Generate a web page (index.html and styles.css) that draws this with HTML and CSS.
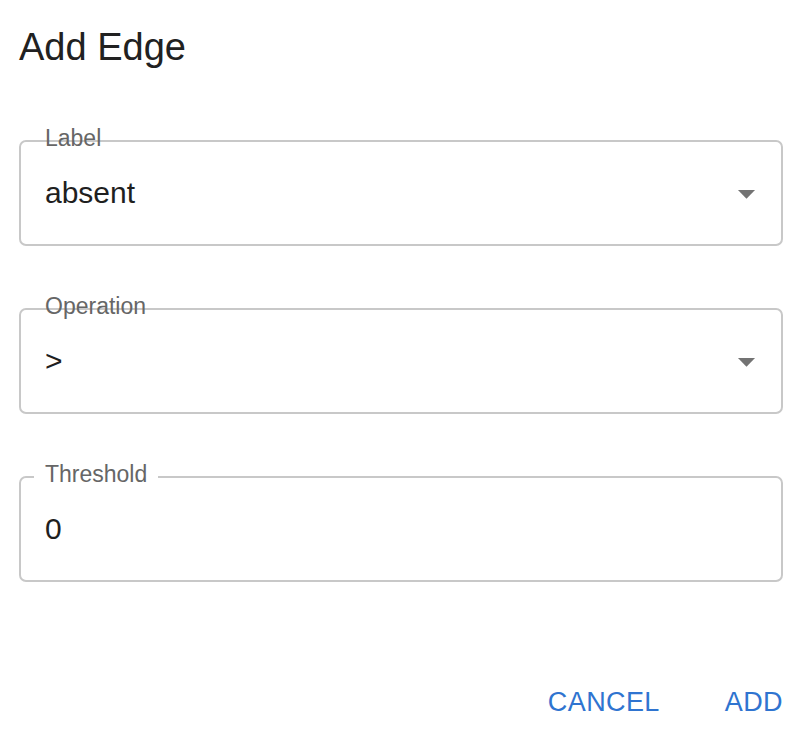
FILE: index.html
```html
<!DOCTYPE html>
<html lang="en">
<head>
<meta charset="utf-8">
<title>Add Edge</title>
<link rel="stylesheet" href="styles.css">
</head>
<body>
<div class="dialog">
  <h2 class="title">Add Edge</h2>
  <div class="content">
    <div class="field">
      <span class="label">Label</span>
      <span class="value">absent</span>
      <svg class="arrow" viewBox="0 0 24 24" aria-hidden="true"><path d="M7 10l5 5 5-5z"/></svg>
    </div>
    <div class="field">
      <span class="label">Operation</span>
      <span class="value">&gt;</span>
      <svg class="arrow" viewBox="0 0 24 24" aria-hidden="true"><path d="M7 10l5 5 5-5z"/></svg>
    </div>
    <div class="field">
      <span class="label notched">Threshold</span>
      <span class="value">0</span>
    </div>
  </div>
  <div class="actions">
    <button class="btn">CANCEL</button>
    <button class="btn">ADD</button>
  </div>
</div>
</body>
</html>
```
FILE: styles.css
```css
html, body {
  margin: 0;
  padding: 0;
  background: #ffffff;
}
body {
  font-family: "Liberation Sans", Arial, sans-serif;
  color: #212121;
}
.dialog {
  width: 806px;
  height: 730px;
  box-sizing: border-box;
  padding: 25px 23px 0 19px;
  display: flex;
  flex-direction: column;
}
.title {
  margin: 0;
  font-size: 38px;
  font-weight: 400;
  line-height: 44px;
  color: #212121;
}
.content {
  margin-top: 71px;
  display: flex;
  flex-direction: column;
  gap: 62px;
}
.field {
  position: relative;
  height: 106px;
  box-sizing: border-box;
  border: 2px solid #c8c8c8;
  border-radius: 7px;
  display: flex;
  align-items: center;
  padding: 0 14px 0 24px;
}
.label {
  position: absolute;
  left: 24px;
  top: -19px;
  font-size: 23px;
  line-height: 30px;
  color: #666666;
}
.label.notched {
  left: 13px;
  padding: 0 11px 0 11px;
  background: #ffffff;
}
.value {
  flex: 1;
  font-size: 30px;
  line-height: 34px;
  color: #1f1f1f;
}
.arrow {
  width: 41px;
  height: 41px;
  fill: #737373;
  flex: none;
}
.actions {
  margin-top: 104px;
  display: flex;
  justify-content: flex-end;
  gap: 65px;
  padding-right: 0;
}
.btn {
  border: 0;
  background: none;
  padding: 0;
  font-family: "Liberation Sans", Arial, sans-serif;
  font-size: 27px;
  line-height: 32px;
  letter-spacing: 0.4px;
  color: #2f74d0;
  cursor: pointer;
}
```
